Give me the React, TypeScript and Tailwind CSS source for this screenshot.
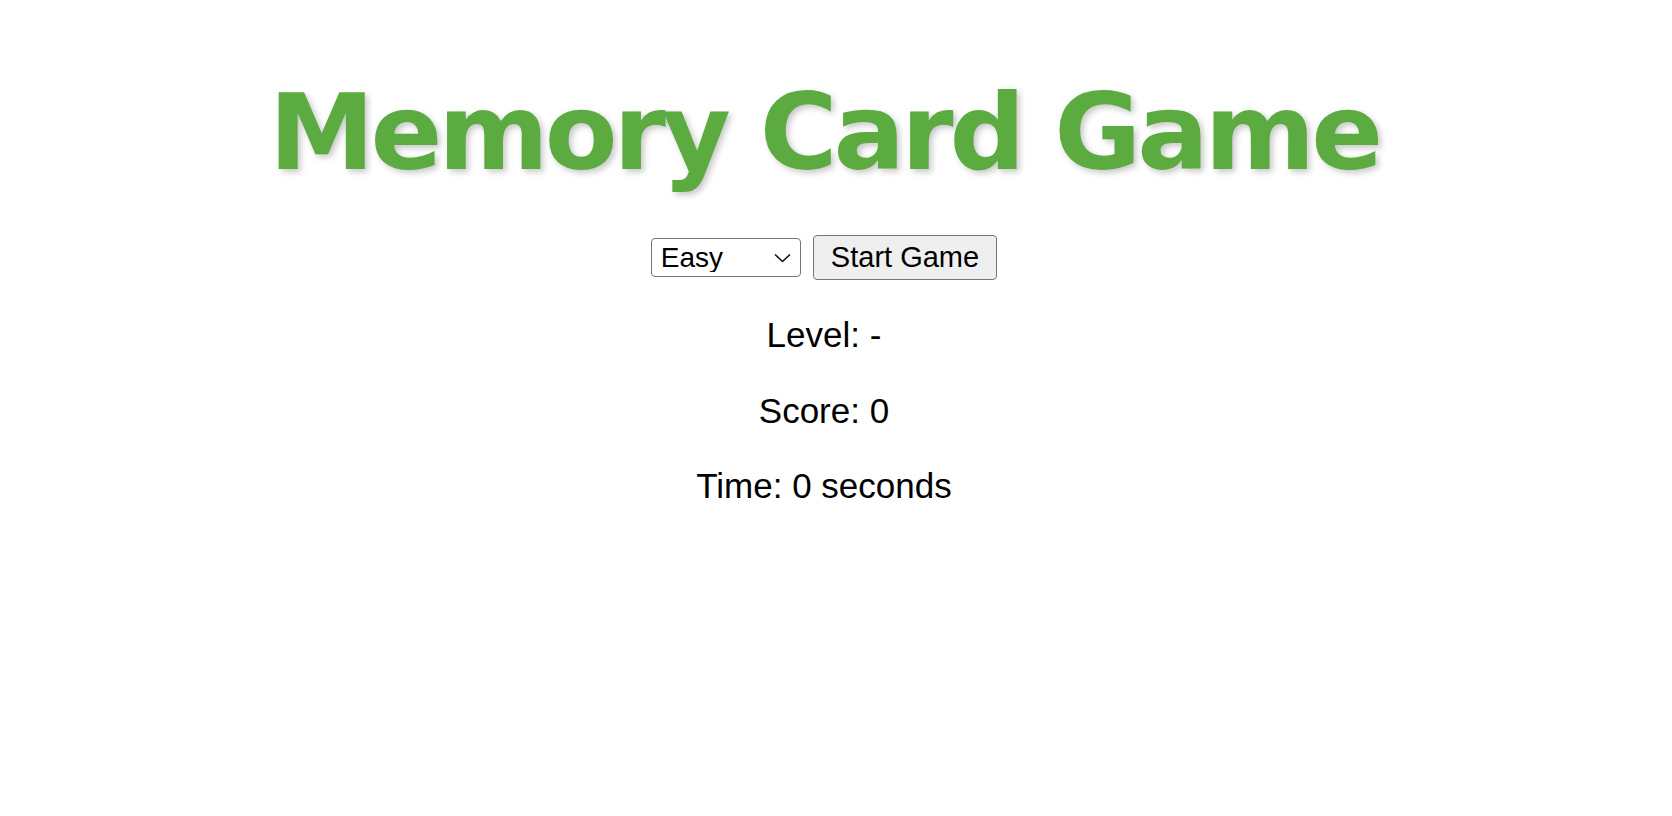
import { useState } from "react";

export default function App() {
  const [level, setLevel] = useState("easy");
  const [started, setStarted] = useState(false);

  return (
    <div className="w-[1648px] min-h-screen bg-white flex flex-col items-center font-['Liberation_Sans',Arial,sans-serif] text-black">
      <h1 className="mt-[80px] text-[106px] leading-[106px] font-bold tracking-[-4px] text-[#5bab41] font-['DejaVu_Sans',Verdana,sans-serif] [text-shadow:3px_3px_6px_rgba(0,0,0,0.22)]">
        Memory Card Game
      </h1>

      <div className="mt-[49px] flex items-center gap-[12px]">
        <div className="relative">
          <select
            value={level}
            onChange={(e) => setLevel(e.target.value)}
            className="appearance-none w-[150px] h-[39px] pl-[9px] pr-[30px] text-[28px] leading-none bg-white border border-[#767676] rounded-[4px] text-black outline-none"
          >
            <option value="easy">Easy</option>
            <option value="medium">Medium</option>
            <option value="hard">Hard</option>
          </select>
          <svg
            className="absolute right-[10px] top-1/2 -translate-y-1/2 pointer-events-none"
            width="17"
            height="9"
            viewBox="0 0 17 9"
            fill="none"
          >
            <path d="M1 1l7.5 7 7.5-7" stroke="#111" strokeWidth="1.6" />
          </svg>
        </div>
        <button
          onClick={() => setStarted(true)}
          className="h-[45px] px-[17px] text-[29px] leading-none bg-[#efefef] border border-[#767676] rounded-[4px] text-black"
        >
          Start Game
        </button>
      </div>

      <div className="mt-[36px] flex flex-col items-center gap-[37.5px] text-[35px] leading-[38px]">
        <p>Level: {started ? level : "-"}</p>
        <p>Score: 0</p>
        <p>Time: 0 seconds</p>
      </div>
    </div>
  );
}
